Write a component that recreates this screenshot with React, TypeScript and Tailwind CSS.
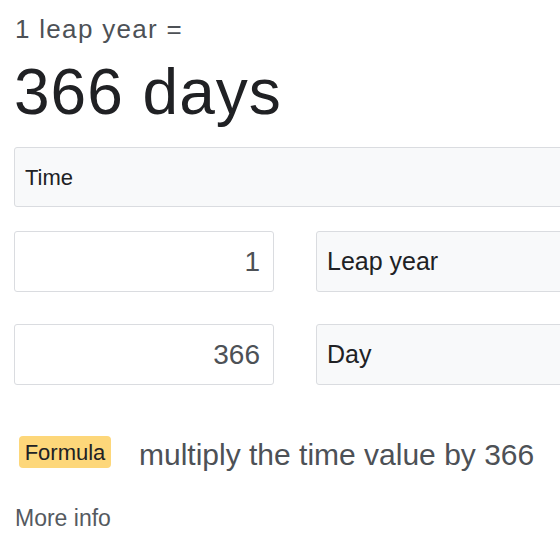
import React from 'react';

const font = { fontFamily: '"Liberation Sans", Arial, sans-serif' };

const App: React.FC = () => {
  return (
    <div className="w-[560px] h-[560px] overflow-hidden bg-white" style={font}>
      <div className="w-[700px] pl-[14px]">
        <div className="pl-px pt-[14px] text-[26px] leading-[30px] tracking-[1.3px] text-[#4d5156]">
          1 leap year =
        </div>
        <div className="mt-[16px] text-[64px] leading-[64px] tracking-[1px] text-[#202124]">
          366 days
        </div>

        <div className="mt-[23px] flex h-[60px] w-[640px] items-center rounded-[3px] border border-[#dadce0] bg-[#f8f9fa] pl-[10px] text-[22px] text-[#202124]">
          Time
        </div>

        <div className="mt-[24px] flex gap-[42px]">
          <div className="flex h-[61px] w-[260px] items-center justify-end rounded-[3px] border border-[#dadce0] bg-white pr-[13px] text-[28px] text-[#4d5156]">
            1
          </div>
          <div className="flex h-[61px] w-[320px] items-center rounded-[3px] border border-[#dadce0] bg-[#f8f9fa] pl-[10px] text-[25px] text-[#202124]">
            Leap year
          </div>
        </div>

        <div className="mt-[32px] flex gap-[42px]">
          <div className="flex h-[61px] w-[260px] items-center justify-end rounded-[3px] border border-[#dadce0] bg-white pr-[13px] text-[28px] text-[#4d5156]">
            366
          </div>
          <div className="flex h-[61px] w-[320px] items-center rounded-[3px] border border-[#dadce0] bg-[#f8f9fa] pl-[10px] text-[25px] text-[#202124]">
            Day
          </div>
        </div>

        <div className="mt-[42px] flex items-center pl-[5px]">
          <span className="flex h-[32px] w-[92px] items-center justify-center rounded-[4px] bg-[#fdd77a] text-[22px] text-[#202124]">
            Formula
          </span>
          <span className="ml-[28px] pt-[5px] text-[30px] text-[#4d5156]">
            multiply the time value by 366
          </span>
        </div>

        <div className="mt-[24px] pl-px text-[23px] text-[#555a5f]">More info</div>
      </div>
    </div>
  );
};

export default App;
